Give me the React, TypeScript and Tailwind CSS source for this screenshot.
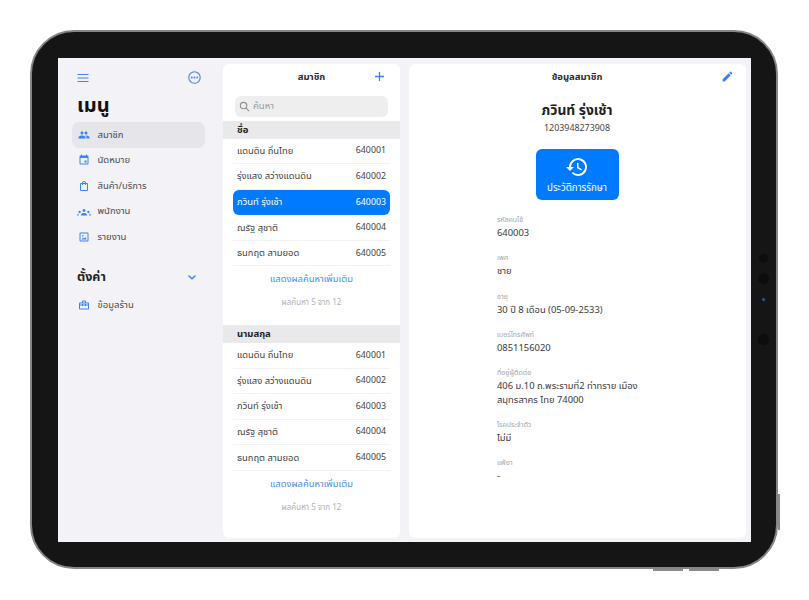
import React from "react";

const font = { fontFamily: '"Noto Sans","Noto Sans Thai","Liberation Sans",sans-serif' };

const people = [
  ["แดนดิน ถิ่นไทย", "640001"],
  ["รุ่งแสง สว่างแดนดิน", "640002"],
  ["ภวินท์ รุ่งเช้า", "640003"],
  ["ณรัฐ สุชาติ", "640004"],
  ["ธนกฤต สามยอด", "640005"],
];

const Blue = "#3b82f6";

function I({ children, size = 12 }: { children: React.ReactNode; size?: number }) {
  return (
    <svg width={size} height={size} viewBox="0 0 24 24" fill={Blue} className="shrink-0">
      {children}
    </svg>
  );
}

const icons = {
  people: (
    <path d="M16 11c1.66 0 3-1.34 3-3s-1.34-3-3-3-3 1.34-3 3 1.34 3 3 3zm-8 0c1.66 0 3-1.34 3-3S9.66 5 8 5 5 6.34 5 8s1.34 3 3 3zm0 2c-2.33 0-7 1.17-7 3.5V19h14v-2.500C15 14.170 10.330 13 8 13zm8 0c-.29 0-.62.02-.97.05C16.190 13.890 17 15.020 17 16.500V19h6v-2.500c0-2.330-4.670-3.500-7-3.500z" />
  ),
  cal: (
    <path d="M19 3h-1V1h-2v2H8V1H6v2H5a2 2 0 0 0-2 2v14a2 2 0 0 0 2 2h14a2 2 0 0 0 2-2V5a2 2 0 0 0-2-2zm0 16H5V8h14v11zM13 13h4v4h-4z" />
  ),
  bag: (
    <path d="M18 6h-2a4 4 0 0 0-8 0H6a2 2 0 0 0-2 2v12a2 2 0 0 0 2 2h12a2 2 0 0 0 2-2V8a2 2 0 0 0-2-2zm-6-2a2 2 0 0 1 2 2h-4a2 2 0 0 1 2-2zm6 16H6V8h2v2h2V8h4v2h2V8h2v12z" />
  ),
  group: (
    <path d="M12 7a2.500 2.500 0 1 1 0 5 2.500 2.500 0 0 1 0-5zM4.500 10a2 2 0 1 1 0 4 2 2 0 0 1 0-4zm15 0a2 2 0 1 1 0 4 2 2 0 0 1 0-4zM7 18v-1.500C7 14.500 9.500 13.500 12 13.500s5 1 5 3V18H7zM0 18v-1c0-1.200 1.500-2 3.500-2.200-.6.600-1 1.400-1 2.200v1H0zm24 0h-2.500v-1c0-.800-.4-1.600-1-2.200 2 .2 3.500 1 3.500 2.200v1z" />
  ),
  report: (
    <path d="M19 3H5a2 2 0 0 0-2 2v14a2 2 0 0 0 2 2h14a2 2 0 0 0 2-2V5a2 2 0 0 0-2-2zm0 16H5V5h14v14zM7 17l3-4 2 2.500 2.500-3.500L17 17H7zm1-7.500a1.500 1.500 0 1 1 3 0 1.500 1.500 0 0 1-3 0z" />
  ),
  store: (
    <path d="M20 7h-4V5a2 2 0 0 0-2-2h-4a2 2 0 0 0-2 2v2H4a2 2 0 0 0-2 2v10a2 2 0 0 0 2 2h16a2 2 0 0 0 2-2V9a2 2 0 0 0-2-2zM10 5h4v2h-4V5zm10 6h-4v-1h-2v1h-4v-1H8v1H4V9h16v2zM8 13v1h2v-1h4v1h2v-1h4v6H4v-6h4z" />
  ),
};

function MenuItem({ icon, label, active, wide }: { icon: React.ReactNode; label: string; active?: boolean; wide?: boolean }) {
  return (
    <div className={`flex h-[25.6px] items-center rounded-[7px] pl-[6px] text-[9.5px] text-[#4a4a4f] ${active ? "bg-[#e5e5ea]" : ""}`}>
      <span className="flex w-[12px] justify-center">
        <I size={wide ? 14 : 12}>{icon}</I>
      </span>
      <span className="ml-[7.500px]">{label}</span>
    </div>
  );
}

function Row({ name, code, selected }: { name: string; code: string; selected?: boolean }) {
  return (
    <div
      className={`mx-[10px] flex h-[25.6px] items-center justify-between px-[4px] text-[9.4px] ${
        selected ? "rounded-[6px] bg-[#007aff] text-white" : "border-b border-[#f2f2f4] text-[#3f3f44]"
      }`}
    >
      <span>{name}</span>
      <span className="text-[8.8px]">{code}</span>
    </div>
  );
}

function Group({ title, selectIndex }: { title: string; selectIndex?: number }) {
  return (
    <div>
      <div className="flex h-[17.5px] items-center bg-[#e9e9eb] pl-[14px] text-[9.5px] font-bold text-[#222]">{title}</div>
      {people.map((p, i) => (
        <Row key={p[1]} name={p[0]} code={p[1]} selected={i === selectIndex} />
      ))}
      <div className="flex h-[26px] items-center justify-center text-[9.4px] text-[#4b8df5]">แสดงผลค้นหาเพิ่มเติม</div>
      <div className="flex h-[20px] items-center justify-center text-[8px] text-[#b0b0b4]">ผลค้นหา 5 จาก 12</div>
    </div>
  );
}

function Field({ label, lines }: { label: string; lines: string[] }) {
  return (
    <div className="mb-[12.800px]">
      <div className="h-[12px] text-[7px] leading-[11px] text-[#a5a5a9]">{label}</div>
      {lines.map((l) => (
        <div key={l} className="h-[13.500px] text-[9.4px] leading-[13.500px] text-[#3a3a3e]">{l}</div>
      ))}
    </div>
  );
}

export default function App() {
  return (
    <div className="h-[600px] w-[809px] overflow-hidden bg-white pl-[30px] pt-[30px]" style={font}>
      <div className="relative h-[539px] w-[748px] rounded-[44px] border-[2px] border-[#85858a] bg-[#151515] p-[26px]">
        {/* side buttons */}
        <div className="absolute right-[-4px] top-[462px] h-[36px] w-[2px] bg-[#8a8a8e]" />
        <div className="absolute bottom-[-4px] left-[621px] h-[2px] w-[30px] bg-[#8a8a8e]" />
        <div className="absolute bottom-[-4px] left-[657px] h-[2px] w-[30px] bg-[#8a8a8e]" />
        {/* cameras */}
        <div className="absolute right-[8px] top-[222px] h-[9px] w-[9px] rounded-full bg-[#0d0d0d]" />
        <div className="absolute right-[7px] top-[241px] h-[11px] w-[11px] rounded-full bg-[#0d0d0d]" />
        <div className="absolute right-[11px] top-[266px] h-[3px] w-[3px] rounded-full bg-[#1f5fb0]" />
        <div className="absolute right-[7px] top-[302px] h-[11px] w-[11px] rounded-full bg-[#0d0d0d]" />

        <div className="flex h-[484px] w-[693px] bg-[#f2f2f7]">
          {/* Sidebar */}
          <aside className="w-[165px] shrink-0">
            <div className="flex items-center justify-between pl-[19px] pr-[22px] pt-[13px]">
              <svg width="12" height="12" viewBox="0 0 12 12" fill="none" stroke={Blue} strokeWidth="1">
                <path d="M0.500 2.500h11M0.500 6h11M0.500 9.500h11" />
              </svg>
              <svg width="13" height="13" viewBox="0 0 13 13" fill="none">
                <circle cx="6.500" cy="6.500" r="5.700" stroke={Blue} strokeWidth="1.100" />
                <circle cx="3.800" cy="6.500" r="0.900" fill={Blue} />
                <circle cx="6.500" cy="6.500" r="0.900" fill={Blue} />
                <circle cx="9.200" cy="6.500" r="0.900" fill={Blue} />
              </svg>
            </div>
            <div className="mt-[5px] h-[31px] pl-[19px] text-[20px] font-bold leading-[31px] text-[#111]">เมนู</div>
            <nav className="mx-[14px] mt-[2px] w-[133px]">
              <MenuItem icon={icons.people} label="สมาชิก" active />
              <MenuItem icon={icons.cal} label="นัดหมาย" />
              <MenuItem icon={icons.bag} label="สินค้า/บริการ" />
              <MenuItem icon={icons.group} label="พนักงาน" wide />
              <MenuItem icon={icons.report} label="รายงาน" />
            </nav>
            <div className="mt-[14px] flex h-[26px] items-center justify-between pl-[19px] pr-[26px] text-[12.5px] font-bold text-[#222]">
              <span>ตั้งค่า</span>
              <svg width="10" height="10" viewBox="0 0 10 10" fill="none" stroke={Blue} strokeWidth="1.400">
                <path d="M1.500 3.500 5 6.800l3.500-3.300" />
              </svg>
            </div>
            <div className="mx-[14px] mt-[2px] w-[133px]">
              <MenuItem icon={icons.store} label="ข้อมูลร้าน" />
            </div>
          </aside>

          {/* List */}
          <section className="mt-[6px] h-[474px] w-[177px] shrink-0 overflow-hidden rounded-[6px] bg-white">
            <div className="relative flex h-[26px] items-center justify-center text-[9.500px] font-bold text-[#2a2a2e]">
              สมาชิก
              <svg className="absolute right-[15px] top-[7px]" width="11" height="11" viewBox="0 0 11 11" stroke={Blue} strokeWidth="1.300">
                <path d="M5.500 1v9M1 5.500h9" />
              </svg>
            </div>
            <div className="mx-[12px] mt-[6px] flex h-[21px] w-[153px] items-center gap-[3px] rounded-[6px] bg-[#eeeeef] pl-[4px] text-[9.500px] text-[#9a9a9e]">
              <svg width="11" height="11" viewBox="0 0 24 24" fill="none" stroke="#8e8e93" strokeWidth="2.400">
                <circle cx="10" cy="10" r="7" />
                <path d="m15 15 7 7" />
              </svg>
              ค้นหา
            </div>
            <div className="mt-[4px]">
              <Group title="ชื่อ" selectIndex={2} />
            </div>
            <div className="mt-[13px]">
              <Group title="นามสกุล" />
            </div>
          </section>

          {/* Detail */}
          <section className="ml-[9px] mt-[6px] h-[474px] w-[337px] shrink-0 rounded-[6px] bg-white">
            <div className="relative flex h-[26px] items-center justify-center pr-[1px] text-[9.500px] font-bold text-[#2a2a2e]">
              ข้อมูลสมาชิก
              <svg className="absolute right-[12px] top-[6px]" width="13" height="13" viewBox="0 0 24 24" fill={Blue}>
                <path d="M3 17.250V21h3.750L17.810 9.940l-3.750-3.750L3 17.250zM20.710 7.040a1 1 0 0 0 0-1.410l-2.340-2.340a1 1 0 0 0-1.410 0l-1.830 1.830 3.750 3.750 1.830-1.830z" />
              </svg>
            </div>
            <div className="flex w-[337px] flex-col items-center pr-[1px]">
              <div className="mt-[9px] h-[22px] text-[13.8px] font-bold leading-[22px] text-[#222]">ภวินท์ รุ่งเช้า</div>
              <div className="h-[14px] text-[8.9px] leading-[14px] text-[#444]">1203948273908</div>
              <div className="mt-[14px] flex h-[51px] w-[83px] flex-col items-center rounded-[6px] bg-[#007aff] pt-[6px] text-white">
                <svg width="24" height="24" viewBox="0 0 24 24" fill="white">
                  <path d="M13 3a9 9 0 0 0-9 9H1l3.890 3.890.07.14L9 12H6a7 7 0 1 1 2.050 4.950l-1.420 1.420A9 9 0 1 0 13 3zm-1 5v5l4.280 2.540.72-1.210-3.500-2.080V8H12z" />
                </svg>
                <span className="mt-[2px] text-[9.7px] leading-[14px]">ประวัติการรักษา</span>
              </div>
            </div>
            <div className="mt-[14px] pl-[88px]">
              <Field label="รหัสคนไข้" lines={["640003"]} />
              <Field label="เพศ" lines={["ชาย"]} />
              <Field label="อายุ" lines={["30 ปี 8 เดือน (05-09-2533)"]} />
              <Field label="เบอร์โทรศัพท์" lines={["0851156020"]} />
              <Field label="ที่อยู่ผู้ติดต่อ" lines={["406 ม.10 ถ.พระรามที่2 ท่าทราย เมือง", "สมุทรสาคร ไทย 74000"]} />
              <Field label="โรคประจำตัว" lines={["ไม่มี"]} />
              <Field label="แพ้ยา" lines={["-"]} />
            </div>
          </section>
        </div>
      </div>
    </div>
  );
}
